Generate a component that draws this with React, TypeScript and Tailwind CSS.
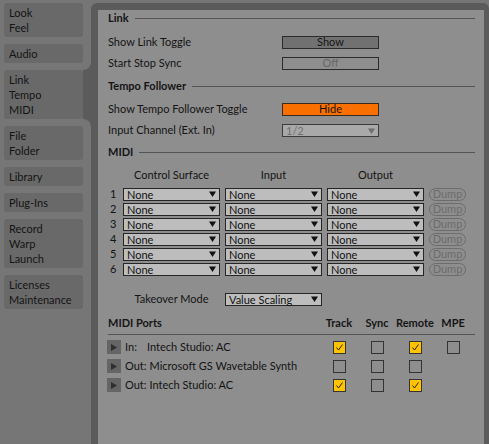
import React from "react"

const tabs = [
  { lines: ["Look", "Feel"] },
  { lines: ["Audio"] },
  { lines: ["Link", "Tempo", "MIDI"], active: true },
  { lines: ["File", "Folder"] },
  { lines: ["Library"] },
  { lines: ["Plug-Ins"] },
  { lines: ["Record", "Warp", "Launch"] },
  { lines: ["Licenses", "Maintenance"] },
]

const midiRows = [1, 2, 3, 4, 5, 6]

const ports = [
  { dir: "In:", name: "Intech Studio: AC", pad: true, track: true, sync: false, remote: true, mpe: false },
  { dir: "Out:", name: "Microsoft GS Wavetable Synth", track: false, sync: false, remote: false },
  { dir: "Out:", name: "Intech Studio: AC", track: true, sync: false, remote: true },
]

function Arrow({ color = "#111" }: { color?: string }) {
  return (
    <svg width="7" height="6" viewBox="0 0 7 6">
      <path d="M0 0.5 L7 0.5 L3.5 6 Z" fill={color} />
    </svg>
  )
}

function Select({ value, disabled }: { value: string; disabled?: boolean }) {
  return (
    <div
      className={`flex h-[13px] w-[97px] items-center justify-between border pl-[3px] pr-[3px] leading-none ${
        disabled ? "border-[#3c3c3c] bg-[#a9a9a9] text-[#707070]" : "border-[#262626] bg-[#bdbdbd] text-[#111]"
      }`}
    >
      <span>{value}</span>
      <Arrow color={disabled ? "#6e6e6e" : "#111"} />
    </div>
  )
}

function SectionHeader({ title, className = "" }: { title: string; className?: string }) {
  return (
    <div className={`flex h-[14px] items-center gap-[6px] ${className}`}>
      <span className="font-bold text-[#151515]">{title}</span>
      <div className="h-px flex-1 bg-[#545454]" />
    </div>
  )
}

function Row({ label, className = "", children }: { label: string; className?: string; children: React.ReactNode }) {
  return (
    <div className={`flex h-[13px] items-center ${className}`}>
      <span className="w-[174px]">{label}</span>
      {children}
    </div>
  )
}

function CheckBox({ on }: { on?: boolean }) {
  return (
    <div
      className={`flex h-[13px] w-[13px] items-center justify-center border border-[#333] ${
        on ? "bg-[#ffc300]" : "bg-[#8e8e8e]"
      }`}
    >
      {on && (
        <svg width="11" height="11" viewBox="0 0 11 11">
          <polyline points="2.5,5.5 4.5,8 8.5,2.5" fill="none" stroke="#222" strokeWidth="1" />
        </svg>
      )}
    </div>
  )
}

export default function App() {
  return (
    <div className="flex h-[444px] w-[489px] overflow-hidden bg-[#767676] font-['Lato',sans-serif] text-[11px] text-[#141414]">
      <nav className="flex w-[91px] shrink-0 flex-col gap-[7px] pl-[4px] pt-[3px]">
        {tabs.map((t) => (
          <div key={t.lines[0]} className="relative flex">
            <div className="w-[79px] rounded-[3px] bg-[#696969] py-[2px] pl-[5px] leading-[15px]">
              {t.lines.map((l) => (
                <div key={l}>{l}</div>
              ))}
            </div>
            {t.active && (
              <>
                <div className="w-[8px] bg-[#5b5b5b]" />
                <div className="absolute -top-[8px] right-0 h-[8px] w-[8px] bg-[#5b5b5b]">
                  <div className="h-full w-full rounded-br-[8px] bg-[#767676]" />
                </div>
                <div className="absolute -bottom-[8px] right-0 h-[8px] w-[8px] bg-[#5b5b5b]">
                  <div className="h-full w-full rounded-tr-[8px] bg-[#767676]" />
                </div>
              </>
            )}
          </div>
        ))}
      </nav>

      <div className="mt-[3px] flex flex-1 rounded-tl-[6px] rounded-tr-[6px] bg-[#5b5b5b] pl-[7px] pr-[5px] pt-[7px]">
        <main className="flex flex-1 flex-col bg-[#8e8e8e] pl-[10px] pr-[9px] pt-px">
          <SectionHeader title="Link" />
          <Row label="Show Link Toggle" className="mt-[11px]">
            <div className="flex h-[13px] w-[97px] items-center justify-center border border-[#2b2b2b] bg-[#717171]">Show</div>
          </Row>
          <Row label="Start Stop Sync" className="mt-[8px]">
            <div className="flex h-[13px] w-[97px] items-center justify-center border border-[#2b2b2b] text-[#676767]">Off</div>
          </Row>

          <SectionHeader title="Tempo Follower" className="mt-[9px]" />
          <Row label="Show Tempo Follower Toggle" className="mt-[10px]">
            <div className="flex h-[13px] w-[97px] items-center justify-center border border-[#3a2a1c] bg-[#f97000]">Hide</div>
          </Row>
          <Row label="Input Channel (Ext. In)" className="mt-[8px]">
            <Select value="1/2" disabled />
          </Row>

          <SectionHeader title="MIDI" className="mt-[8px]" />
          <div className="mt-[8px] grid h-[14px] grid-cols-[10px_97px_97px_97px_37px] items-center gap-x-[5px]">
            <span />
            <span className="text-center">Control Surface</span>
            <span className="text-center">Input</span>
            <span className="text-center">Output</span>
            <span />
          </div>
          <div className="mt-[5px] flex flex-col gap-[2px]">
            {midiRows.map((n) => (
              <div key={n} className="grid h-[13px] grid-cols-[10px_97px_97px_97px_37px] items-center gap-x-[5px]">
                <span className="pl-[2px]">{n}</span>
                <Select value="None" />
                <Select value="None" />
                <Select value="None" />
                <div className="flex h-[13px] items-center justify-center rounded-full border border-[#6c6c6c] text-[#6c6c6c]">
                  Dump
                </div>
              </div>
            ))}
          </div>

          <div className="mt-[17px] grid h-[13px] grid-cols-[10px_97px_97px] items-center gap-x-[5px]">
            <span />
            <span className="text-center">Takeover Mode</span>
            <Select value="Value Scaling" />
          </div>

          <div className="mt-[12px] flex h-[14px] items-center pr-[3px]">
            <span className="flex-1 font-bold text-[#151515]">MIDI Ports</span>
            {["Track", "Sync", "Remote", "MPE"].map((h) => (
              <span key={h} className="w-[38px] text-center font-bold text-[#151515]">
                {h}
              </span>
            ))}
          </div>
          <div className="mt-[4px] h-px bg-[#545454]" />

          <div className="mt-[5px] flex flex-col gap-[5px]">
            {ports.map((p, i) => (
              <div key={i} className="flex h-[14px] items-center pr-[3px]">
                <div className="flex flex-1 items-center">
                  <div className="-ml-[1px] flex h-[14px] w-[14px] items-center justify-center bg-[#656565]">
                    <svg width="6" height="7" viewBox="0 0 6 7">
                      <path d="M0 0 L6 3.5 L0 7 Z" fill="#2e2e2e" />
                    </svg>
                  </div>
                  <span className={`ml-[4px] ${p.pad ? "w-[22px]" : ""}`}>{p.dir}</span>
                  <span className={p.pad ? "" : "ml-[3px]"}>{p.name}</span>
                </div>
                <div className="flex w-[38px] justify-center">
                  <CheckBox on={p.track} />
                </div>
                <div className="flex w-[38px] justify-center">
                  <CheckBox on={p.sync} />
                </div>
                <div className="flex w-[38px] justify-center">
                  <CheckBox on={p.remote} />
                </div>
                <div className="flex w-[38px] justify-center">{p.mpe !== undefined && <CheckBox on={p.mpe} />}</div>
              </div>
            ))}
          </div>
        </main>
      </div>
    </div>
  )
}
